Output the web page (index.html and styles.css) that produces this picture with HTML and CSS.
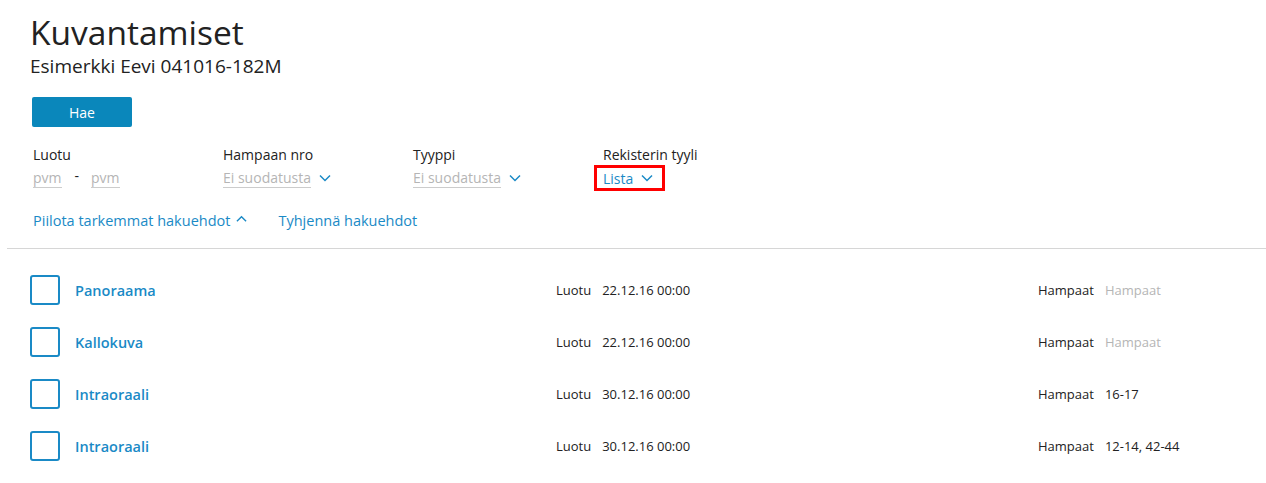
FILE: index.html
```html
<!DOCTYPE html>
<html lang="fi">
<head>
  <meta charset="UTF-8" />
  <title>Kuvantamiset</title>
  <link rel="stylesheet" href="styles.css">
</head>
<body>

  <header class="page-head">
    <h1>Kuvantamiset</h1>
    <p class="patient">Esimerkki Eevi 041016-182M</p>
    <button class="btn">Hae</button>
  </header>

  <section class="filters">
    <div class="filter">
      <span class="filter-label">Luotu</span>
      <div class="filter-value">
        <span class="empty">pvm</span>
        <span class="dash">-</span>
        <span class="empty">pvm</span>
      </div>
    </div>
    <div class="filter">
      <span class="filter-label">Hampaan nro</span>
      <div class="filter-value">
        <span class="empty">Ei suodatusta</span>
        <svg class="chevron" viewBox="0 0 12 8"><path d="M1 1.5 6 6.5 11 1.5" /></svg>
      </div>
    </div>
    <div class="filter">
      <span class="filter-label">Tyyppi</span>
      <div class="filter-value">
        <span class="empty">Ei suodatusta</span>
        <svg class="chevron" viewBox="0 0 12 8"><path d="M1 1.5 6 6.5 11 1.5" /></svg>
      </div>
    </div>
    <div class="filter">
      <span class="filter-label">Rekisterin tyyli</span>
      <div class="filter-value highlight">
        <span class="selected">Lista</span>
        <svg class="chevron" viewBox="0 0 12 8"><path d="M1 1.5 6 6.5 11 1.5" /></svg>
      </div>
    </div>
  </section>

  <div class="links">
    <a href="#">Piilota tarkemmat hakuehdot
      <svg class="chevron up" viewBox="0 0 12 8"><path d="M1 6.5 6 1.5 11 6.5" /></svg>
    </a>
    <a href="#">Tyhjennä hakuehdot</a>
  </div>

  <hr class="divider">

  <ul class="results">
    <li class="row">
      <span class="check"></span>
      <a class="name" href="#">Panoraama</a>
      <span class="meta"><span class="key">Luotu</span>22.12.16 00:00</span>
      <span class="meta teeth"><span class="key">Hampaat</span><span class="muted">Hampaat</span></span>
    </li>
    <li class="row">
      <span class="check"></span>
      <a class="name" href="#">Kallokuva</a>
      <span class="meta"><span class="key">Luotu</span>22.12.16 00:00</span>
      <span class="meta teeth"><span class="key">Hampaat</span><span class="muted">Hampaat</span></span>
    </li>
    <li class="row">
      <span class="check"></span>
      <a class="name" href="#">Intraoraali</a>
      <span class="meta"><span class="key">Luotu</span>30.12.16 00:00</span>
      <span class="meta teeth"><span class="key">Hampaat</span>16-17</span>
    </li>
    <li class="row">
      <span class="check"></span>
      <a class="name" href="#">Intraoraali</a>
      <span class="meta"><span class="key">Luotu</span>30.12.16 00:00</span>
      <span class="meta teeth"><span class="key">Hampaat</span>12-14, 42-44</span>
    </li>
  </ul>

</body>
</html>
```

FILE: styles.css
```css
* {
  margin: 0;
  padding: 0;
  box-sizing: border-box;
}

body {
  font-family: 'Open Sans', 'Noto Sans', sans-serif;
  background: #fff;
  color: #222;
  font-size: 13px;
}

.page-head {
  padding: 10px 0 0 30px;
}

.page-head h1 {
  font-size: 33.5px;
  font-weight: normal;
  line-height: 44px;
  color: #222;
}

.patient {
  font-size: 19px;
  line-height: 24px;
}

.btn {
  margin-top: 19px;
  margin-left: 2px;
  width: 100px;
  height: 30px;
  background: #0a87bb;
  color: #fff;
  border: none;
  border-radius: 2px;
  font-family: inherit;
  font-size: 14px;
}

.filters {
  display: flex;
  padding: 18px 0 0 33px;
}

.filter {
  width: 190px;
  display: flex;
  flex-direction: column;
}

.filter-label {
  font-size: 14px;
  line-height: 20px;
}

.filter-value {
  display: flex;
  align-items: center;
  height: 26px;
  font-size: 14px;
}

.empty {
  color: #b5b5b5;
  border-bottom: 1px solid #ccc;
  line-height: 18px;
}

.dash {
  margin: 0 12px 6px 13px;
  color: #222;
}

.selected {
  color: #1a8ac6;
}

.highlight {
  align-self: flex-start;
  margin-left: -9px;
  padding: 0 9px 0 6px;
  border: 3px solid #f00;
}

.chevron {
  width: 12px;
  height: 8px;
  margin-left: 8px;
  fill: none;
  stroke: #1a8ac6;
  stroke-width: 1.5;
}

.links {
  display: flex;
  gap: 31px;
  padding: 19px 0 0 33px;
  height: 57px;
}

.links a {
  color: #1a8ac6;
  text-decoration: none;
  font-size: 14.5px;
  display: flex;
  align-items: center;
  height: 20px;
}

.links .chevron.up {
  margin-left: 6px;
  width: 11px;
  margin-bottom: 2px;
}

.divider {
  border: none;
  border-top: 1px solid #d6d6d6;
  margin-left: 7px;
}

.results {
  list-style: none;
  padding: 15px 0 0 30px;
}

.row {
  display: flex;
  align-items: center;
  height: 52px;
}

.check {
  width: 30px;
  height: 30px;
  border: 2px solid #1a8ac6;
  border-radius: 3px;
  flex: none;
}

.name {
  width: 481px;
  margin-left: 15px;
  color: #1a8ac6;
  font-size: 14.5px;
  font-weight: 600;
  text-decoration: none;
}

.meta {
  width: 482px;
  font-size: 13px;
}

.meta.teeth {
  width: auto;
}

.key {
  margin-right: 11px;
}

.muted {
  color: #b5b5b5;
}
```
